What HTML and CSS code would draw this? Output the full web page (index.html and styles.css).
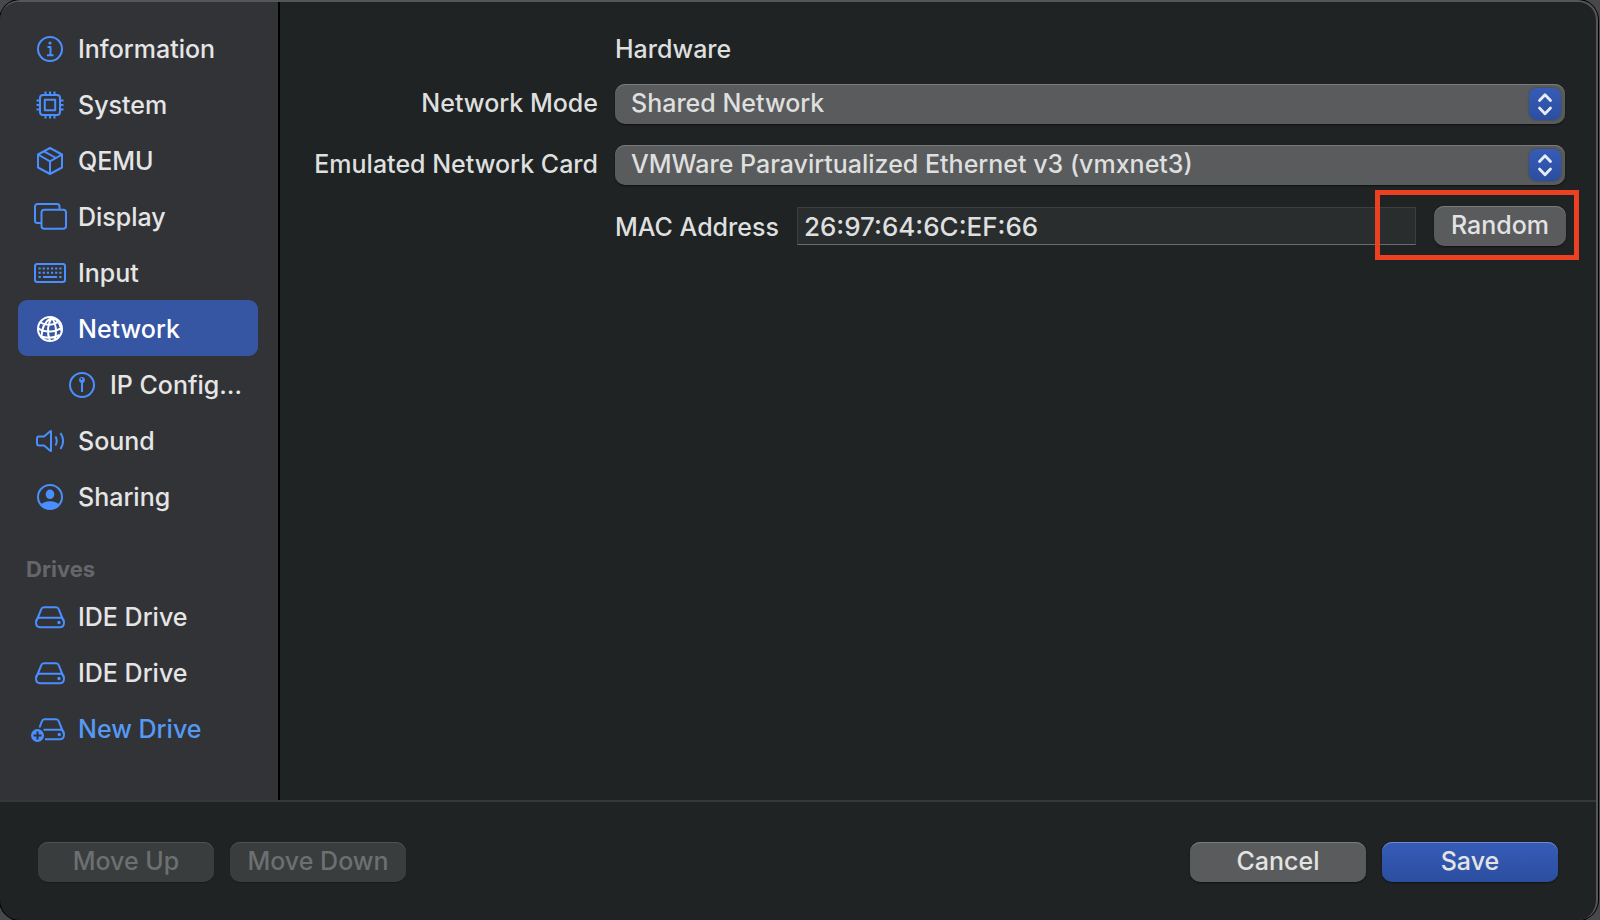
FILE: index.html
```html
<!DOCTYPE html>
<html lang="en">
<head>
<meta charset="utf-8">
<title>Virtual Machine Settings</title>
<link rel="stylesheet" href="styles.css">
</head>
<body>
<div class="window">
  <div class="body">
    <nav class="sidebar" aria-label="Settings">
      <a class="item" href="#information">
        <svg class="icon" viewBox="0 0 36 36"><circle cx="18" cy="18" r="12"/><path d="M15.500 16h3v8M15 24.200h6.500"/><circle class="fill" cx="18" cy="12" r="1.600"/></svg>
        <span>Information</span></a>
      <a class="item" href="#system">
        <svg class="icon" viewBox="0 0 36 36"><rect x="8" y="8" width="20" height="20" rx="3"/><rect x="12.800" y="12.800" width="10.400" height="10.400"/><path d="M13.500 8V4.500M18 8V4.500M22.500 8V4.500M13.500 28v3.500M18 28v3.500M22.500 28v3.500M8 13.500H4.500M8 18H4.500M8 22.500H4.500M28 13.500h3.500M28 18h3.500M28 22.500h3.500"/></svg>
        <span>System</span></a>
      <a class="item" href="#qemu">
        <svg class="icon" viewBox="0 0 36 36"><path d="M18 5L30 11.500V24.500L18 31L6 24.500V11.500ZM6 11.500L18 18.300L30 11.500M18 18.300V31M12 8.300L24 15"/></svg>
        <span>QEMU</span></a>
      <a class="item" href="#display">
        <svg class="icon" viewBox="0 0 36 36"><path d="M9.500 24H5.500A2.500 2.500 0 0 1 3 21.500V7.500A2.500 2.500 0 0 1 5.500 5H25A2.500 2.500 0 0 1 27.500 7.500V10"/><rect x="9.500" y="10.700" width="24.500" height="19" rx="2.800"/></svg>
        <span>Display</span></a>
      <a class="item" href="#input">
        <svg class="icon" viewBox="0 0 36 36"><rect x="3" y="9" width="30" height="18" rx="2.200"/><path class="keys" d="M6.500 13.500h23M6.500 17.700h23"/><path d="M6.500 22h2.300M11 22h14M27.200 22h2.300"/></svg>
        <span>Input</span></a>
      <a class="item selected" href="#network" aria-current="page">
        <svg class="icon" viewBox="0 0 36 36"><circle cx="18" cy="18" r="12"/><path d="M20 6.500C13.500 10 9.500 17 9.500 26M20 6.500C15.500 13 15 22 18 30M20 6.500C23.500 12 25 20 23 28.500M20 6.500C25 8 28.500 13 29.500 20M8.500 11.500C14 15 22 14.500 27 10M6 17C12 22 24 21.500 29.500 16.500M8.500 25.500C14 27 22 27 27.500 24"/></svg>
        <span>Network</span></a>
      <a class="item nested" href="#ip">
        <svg class="icon" viewBox="0 0 36 36"><circle cx="18" cy="18" r="12"/><path d="M18 14v11"/><circle class="fill" cx="18" cy="13" r="2.900"/><circle class="hole" cx="17.500" cy="12" r="0.900"/></svg>
        <span>IP Configuration</span></a>
      <a class="item" href="#sound">
        <svg class="icon" viewBox="0 0 36 36"><path d="M19 8.500V27.500Q19 28.300 18.300 27.700L12 22.500H7Q5 22.500 5 20.500V15.500Q5 13.500 7 13.500H12L18.300 8.300Q19 7.700 19 8.500ZM23.500 13.500Q26 18 23.500 22.500M28.500 10Q33.700 18 28.500 26"/></svg>
        <span>Sound</span></a>
      <a class="item" href="#sharing">
        <svg class="icon" viewBox="0 0 36 36"><circle cx="18" cy="18" r="12"/><ellipse class="fill" cx="18" cy="15.300" rx="4.300" ry="4.800"/><path class="fill" d="M9 26Q11.500 22.300 18 22.300T27 26Q23 30.500 18 30.500T9 26Z"/></svg>
        <span>Sharing</span></a>
      <h2 class="heading">Drives</h2>
      <a class="item" href="#drive1">
        <svg class="icon" viewBox="0 0 36 36"><path d="M4.500 22L9.300 10.200Q10 8.300 12 8.300H24Q26 8.300 26.700 10.200L31.500 22M8 18.800H28Q32 18.800 32 23.500T28 28.200H8Q4 28.200 4 23.500T8 18.800Z"/><circle class="fill" cx="27" cy="23.500" r="1.700"/></svg>
        <span>IDE Drive</span></a>
      <a class="item" href="#drive2">
        <svg class="icon" viewBox="0 0 36 36"><path d="M4.500 22L9.300 10.200Q10 8.300 12 8.300H24Q26 8.300 26.700 10.200L31.500 22M8 18.800H28Q32 18.800 32 23.500T28 28.200H8Q4 28.200 4 23.500T8 18.800Z"/><circle class="fill" cx="27" cy="23.500" r="1.700"/></svg>
        <span>IDE Drive</span></a>
      <button class="item add" type="button">
        <svg class="icon" viewBox="0 0 36 36"><path d="M7.500 16.500L10 10.200Q10.700 8.300 12.500 8.300H24Q26 8.300 26.700 10.200L31.500 22M11.500 18.800H28Q32 18.800 32 23.500T28 28.200H13"/><circle class="fill" cx="27.300" cy="23.500" r="1.700"/><circle class="fill" cx="5.500" cy="24.500" r="6.500"/><path class="plus" d="M1.500 24.500h8M5.500 20.500v8"/></svg>
        <span>New Drive</span></button>
    </nav>
    <main class="main">
      <form class="form">
        <h1 class="title">Hardware</h1>
        <label class="label" for="mode">Network Mode</label>
        <div class="popup">
          <select id="mode" class="select"><option>Shared Network</option></select>
          <svg class="stepper" viewBox="0 0 32 32"><path d="M10.500 12.500L16 6.800L21.500 12.500M10.500 20L16 25.700L21.500 20"/></svg>
        </div>
        <label class="label" for="card">Emulated Network Card</label>
        <div class="popup">
          <select id="card" class="select"><option>VMWare Paravirtualized Ethernet v3 (vmxnet3)</option></select>
          <svg class="stepper" viewBox="0 0 32 32"><path d="M10.500 12.500L16 6.800L21.500 12.500M10.500 20L16 25.700L21.500 20"/></svg>
        </div>
        <div class="mac">
          <label class="mac-label" for="mac">MAC Address</label>
          <input id="mac" class="field" type="text" value="26:97:64:6C:EF:66">
          <div class="marked"><button class="button random" type="button">Random</button></div>
        </div>
      </form>
    </main>
  </div>
  <footer class="footer">
    <button class="button wide" type="button" disabled>Move Up</button>
    <button class="button wide" type="button" disabled>Move Down</button>
    <span class="spacer"></span>
    <button class="button wide" type="button">Cancel</button>
    <button class="button wide primary" type="button">Save</button>
  </footer>
</div>
</body>
</html>
```
FILE: styles.css
```css
* { box-sizing: border-box; }

body {
  margin: 0;
  background: #48484b;
  color: #dedfdf;
  font: 450 25px/32px Inter, "Liberation Sans", sans-serif;
}

button, input, select {
  margin: 0;
  font: inherit;
  color: inherit;
}

.window {
  display: flex;
  flex-direction: column;
  min-height: 100vh;
  margin-right: 2px;
  overflow: hidden;
  background: #202324;
  border: 2px solid #555657;
  border-left: 0;
  border-bottom: 0;
  border-radius: 20px;
  box-shadow: 0 0 0 1px #000;
}

.body { display: flex; flex: 1; }

.sidebar {
  flex: none;
  width: 280px;
  padding: 18px 20px 40px 18px;
  background: #323336;
  border-right: 2px solid #000;
}

.item {
  display: flex;
  align-items: center;
  gap: 10px;
  width: 100%;
  height: 56px;
  padding: 2px 14px 0;
  border: 0;
  border-radius: 9px;
  background: none;
  color: #e5e5e6;
  text-decoration: none;
  text-align: left;
}

.item span {
  overflow: hidden;
  white-space: nowrap;
  text-overflow: ellipsis;
}

.nested { padding-left: 46px; }
.selected { background: #3655a2; color: #fff; }
.add { color: #549af5; }

.icon {
  flex: none;
  width: 36px;
  height: 36px;
  overflow: visible;
  fill: none;
  stroke: #4a8fff;
  stroke-width: 2;
  stroke-linejoin: round;
}

.icon .fill { fill: #4a8fff; stroke: none; }
.icon .hole { fill: #323336; stroke: none; }
.icon .keys { stroke-dasharray: 2.2 1.96; }
.icon .plus { stroke: #323336; }
.selected .icon { stroke: #fff; }

.heading {
  margin: 0;
  padding: 29px 8px 3px;
  color: #656669;
  font-size: 22px;
  font-weight: 700;
}

.main { flex: 1; min-width: 0; padding: 31px 31px 0 32px; }

.form {
  display: grid;
  grid-template-columns: 286px 1fr;
  column-gap: 17px;
  row-gap: 21px;
  align-items: center;
}

.title {
  grid-column: 2;
  margin: 0 0 -2px;
  font-size: 25px;
  font-weight: 450;
}

.label { padding-bottom: 2px; text-align: right; white-space: nowrap; }

.popup { position: relative; height: 40px; }

.select {
  width: 100%;
  height: 40px;
  padding: 0 48px 2px 16px;
  border: 0;
  border-radius: 10px;
  appearance: none;
  background: #5a5b5c;
  box-shadow: inset 0 1px #7a7b7c, 0 1px 2px #0008;
}

.stepper {
  position: absolute;
  top: 4px;
  right: 4px;
  width: 32px;
  height: 32px;
  border-radius: 8px;
  background: linear-gradient(#365cb8, #2b4e9f);
  box-shadow: 0 0 2px #0006;
  fill: none;
  stroke: #e8ecf6;
  stroke-width: 2.8;
  stroke-linecap: round;
  stroke-linejoin: round;
  pointer-events: none;
}

.mac {
  grid-column: 2;
  display: flex;
  align-items: center;
  gap: 18px;
  margin-right: -1px;
}

.mac-label { padding-top: 2px; }

.field {
  flex: 1;
  min-width: 0;
  height: 38px;
  padding: 0 6px;
  border: 1px solid #3c3f40;
  border-bottom-color: #6a6c6d;
  border-radius: 0;
  background: #2a2d2e;
  font-size: 26px;
}

.marked { position: relative; }

.marked::after {
  content: "";
  position: absolute;
  inset: -16px -13px -14px -59px;
  border: 5px solid #ec4023;
  pointer-events: none;
}

.button {
  height: 40px;
  padding: 0 16px 2px;
  border: 0;
  border-radius: 10px;
  background: #5a5b5c;
  box-shadow: inset 0 1px #7a7b7c, 0 1px 2px #0008;
  color: #e3e3e4;
}

.button:disabled {
  background: #3a3d3e;
  box-shadow: inset 0 1px #4f5253, 0 1px 1px #0004;
  color: #6d6f70;
}

.wide { width: 176px; }
.random { min-width: 132px; }

.primary {
  background: linear-gradient(#365cb8, #2b4e9f);
  box-shadow: inset 0 1px #7189c8, 0 1px 2px #0008;
}

.footer {
  display: flex;
  gap: 16px;
  padding: 40px 38px 38px;
  border-top: 2px solid #37383b;
}

.spacer { flex: 1; }
```
